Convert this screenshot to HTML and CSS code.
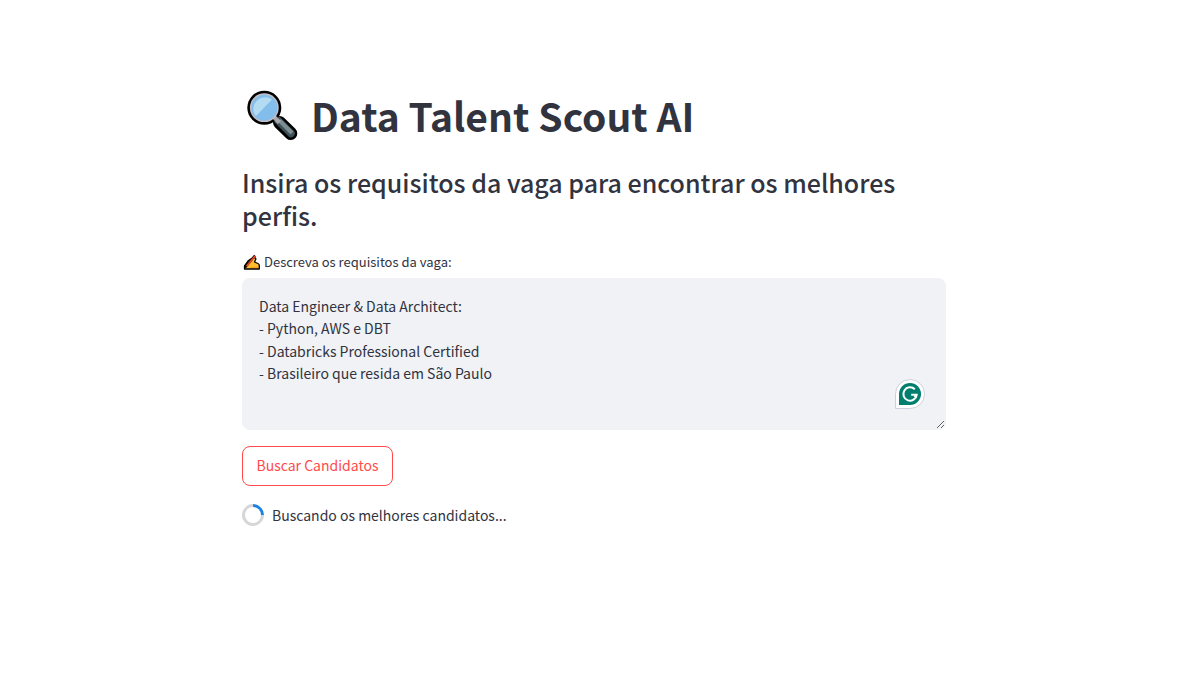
FILE: index.html
```html
<!DOCTYPE html>
<html lang="pt-BR">
<head>
<meta charset="utf-8">
<title>Data Talent Scout AI</title>
<link rel="stylesheet" href="styles.css">
</head>
<body>
<main class="app">
  <h1 class="title">
    <svg class="title-icon" viewBox="0 0 56 56" aria-hidden="true">
      <path d="M37.500 35.500L48.800 46.500" fill="none" stroke="#000" stroke-width="13" stroke-linecap="round"/>
      <path d="M33 30.500L49 46.500" fill="none" stroke="#3c5058" stroke-width="7.500" stroke-linecap="round"/>
      <path d="M37.500 33.500L50 46" fill="none" stroke="#7b8d91" stroke-width="4"/>
      <circle cx="22.300" cy="20.700" r="17" fill="#000"/>
      <path d="M31 29l6.500 6.500" stroke="#a9a8ac" stroke-width="4.500"/>
      <circle cx="22.300" cy="20.700" r="14.400" fill="#c3bfc5"/>
      <circle cx="22.300" cy="20.700" r="13" fill="#82bdec"/>
      <path d="M12.500 27A11.700 11.700 0 0 1 30 12.500L14 29Q13 28 12.500 27z" fill="#b3dcf2"/>
    </svg>
    <span>Data Talent Scout AI</span>
  </h1>
  <h3 class="subtitle">Insira os requisitos da vaga para encontrar os melhores perfis.</h3>
  <form class="form">
    <label class="label" for="req">
      <svg class="label-icon" viewBox="0 0 18 18" aria-hidden="true">
        <path d="M2.500 16V13L6.500 7.500L9.500 5.500L12 4.500Q14.500 5 13.500 7L12.500 9L16 10.500Q17.300 11 17.300 12.500V16z" fill="#ffbd2e" stroke="#000" stroke-width="1.300" stroke-linejoin="round"/>
        <path d="M9 14.500h7" stroke="#f5a123" stroke-width="1"/>
        <path d="M13 2.500L3 14.500" stroke="#000" stroke-width="2.400"/>
        <path d="M13 3L4.500 13.200" stroke="#f04a2a" stroke-width="1.600"/>
      </svg>
      <span>Descreva os requisitos da vaga:</span>
    </label>
    <div class="field">
      <textarea class="area" id="req" spellcheck="false">Data Engineer &amp; Data Architect:
- Python, AWS e DBT
- Databricks Professional Certified
- Brasileiro que resida em São Paulo</textarea>
      <svg class="badge" viewBox="0 0 30 30" aria-hidden="true">
        <path d="M15 .500A14.500 14.500 0 1 1 15 29.500H.500V15A14.500 14.500 0 0 1 15 .500z" fill="#fff" stroke="#cdd0dc"/>
        <path d="M15 4A11 11 0 1 1 15 26H4V15A11 11 0 0 1 15 4z" fill="#027e6f"/>
        <path d="M19.800 10.300A6.700 6.700 0 1 0 21.700 15.800H16.200M21.700 15.800L19.500 18.500" fill="none" stroke="#fff" stroke-width="2"/>
      </svg>
    </div>
    <button class="search" type="button">Buscar Candidatos</button>
  </form>
  <div class="status" role="status"><span class="spinner"></span>Buscando os melhores candidatos...</div>
</main>
</body>
</html>
```
FILE: styles.css
```css
* { box-sizing: border-box; }
body {
  margin: 0;
  padding-left: 5px;
  color: #31333f;
  background: #fff;
  font: 14px/1.6 "Noto Sans CJK JP", "Noto Sans", sans-serif;
}
.app { max-width: 704px; margin: 0 auto; padding-top: 87px; }
.title {
  display: flex;
  gap: 13px;
  align-items: center;
  margin: 0 0 23px;
  font-size: 39px;
  line-height: 52px;
  font-weight: 700;
}
.title-icon { width: 56px; height: 56px; }
.subtitle { margin: 0 0 19px; font-size: 25px; line-height: 33px; font-weight: 500; }
.label {
  display: flex;
  gap: 4px;
  align-items: center;
  margin-bottom: 5px;
  font-size: 13px;
  line-height: 22px;
}
.label-icon { width: 18px; height: 18px; }
.field { position: relative; }
.area {
  display: block;
  width: 100%;
  height: 152px;
  padding: 16px;
  border: 1px solid transparent;
  border-radius: 8px;
  background: #f0f2f6;
  color: inherit;
  font: inherit;
  resize: vertical;
}
.badge { position: absolute; right: 21px; bottom: 21px; width: 30px; height: 30px; }
.search {
  display: block;
  min-width: 151px;
  height: 40px;
  margin: 16px 0;
  padding: 0 12px 2px;
  border: 1px solid #ff4b4b;
  border-radius: 8px;
  background: #fff;
  color: #ff4b4b;
  font: inherit;
}
.status { display: flex; gap: 8px; align-items: center; padding-top: 2px; }
.spinner {
  width: 22px;
  height: 22px;
  border: 3px solid #d6d6d9;
  border-top-color: #1c83e1;
  border-radius: 50%;
  transform: rotate(45deg);
}
```
